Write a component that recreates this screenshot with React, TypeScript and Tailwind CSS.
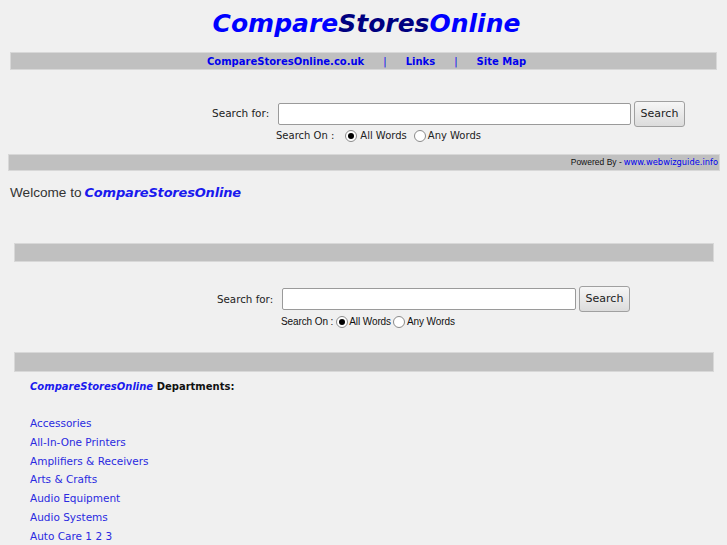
import React from 'react';

const departments = [
  'Accessories',
  'All-In-One Printers',
  'Amplifiers & Receivers',
  'Arts & Crafts',
  'Audio Equipment',
  'Audio Systems',
  'Auto Care 1 2 3',
];

function Radio({ checked }: { checked?: boolean }) {
  return (
    <span className="inline-flex h-[12px] w-[12px] items-center justify-center rounded-full border border-[#8a8a8a] bg-white">
      {checked && <span className="h-[6px] w-[6px] rounded-full bg-black" />}
    </span>
  );
}

function SearchBox({ variant }: { variant: 'top' | 'mid' }) {
  const top = variant === 'top';
  return (
    <div className={top ? 'flex flex-col pl-[212px] pt-[31px]' : 'flex flex-col pl-[217px] pt-[24px]'}>
      <div className="flex items-center">
        <span className={top ? 'w-[66px] text-[10.5px] text-[#222]' : 'w-[65px] text-[10.3px] text-[#222]'}>Search for:</span>
        <div className={top ? 'h-[22px] w-[353px] rounded-[2px] border border-[#9a9a9a] bg-white' : 'h-[22px] w-[294px] rounded-[2px] border border-[#9a9a9a] bg-white'} />
        <button className="ml-[3px] h-[26px] w-[51px] rounded-[3px] border border-[#a0a0a0] bg-gradient-to-b from-[#f6f6f6] to-[#dcdcdc] text-[11px] text-[#222]">
          Search
        </button>
      </div>
      {top ? (
        <div className="mt-[1px] flex items-center pl-[64px] text-[10px] text-[#222]">
          <span className="mr-[11px]">Search On :</span>
          <Radio checked />
          <span className="ml-[3px] mr-[7px]">All Words</span>
          <Radio />
          <span className="ml-[2px]">Any Words</span>
        </div>
      ) : (
        <div className="mt-[2px] flex items-center pl-[64px] text-[10px] tracking-[-0.1px] text-[#111]" style={{ fontFamily: '"Liberation Sans", Arial, sans-serif' }}>
          <span className="mr-[3px]">Search On :</span>
          <Radio checked />
          <span className="ml-[1px] mr-[2px]">All Words</span>
          <Radio />
          <span className="ml-[2px]">Any Words</span>
        </div>
      )}
    </div>
  );
}

export default function App() {
  return (
    <div className="min-h-[545px] w-[727px] overflow-hidden bg-[#f0f0f0]" style={{ fontFamily: '"DejaVu Sans", Verdana, sans-serif' }}>
      <h1 className="pt-[6px] pl-[6px] text-center text-[25px] leading-[36px] font-bold italic">
        <span className="text-[#0000ff]">Compare</span>
        <span className="text-[#000080]">Stores</span>
        <span className="text-[#0000ff]">Online</span>
      </h1>

      <div className="mx-[10px] mt-[10px] flex h-[18px] items-center justify-center border border-[#d8d8d8] bg-[#c0c0c0] pl-[6px] text-[10px] font-bold text-[#0000ee]">
        <span>CompareStoresOnline.co.uk</span>
        <span className="mx-[19px] font-normal">|</span>
        <span>Links</span>
        <span className="mx-[19px] font-normal">|</span>
        <span>Site Map</span>
      </div>

      <SearchBox variant="top" />

      <div className="ml-[8px] mr-[7px] mt-[11px] flex h-[17px] items-center justify-end border border-[#d8d8d8] bg-[#c0c0c0] pr-[1px] text-[8.3px]">
        <span className="text-[8.5px] text-[#111]" style={{ fontFamily: '"Liberation Sans", Arial, sans-serif' }}>Powered By - </span>
        <span className="ml-[2px] text-[#0000ee]">www.webwizguide.info</span>
      </div>

      <div className="ml-[10px] mt-[12px] flex items-baseline">
        <span className="mr-[3px] text-[13.6px] text-[#333]" style={{ fontFamily: '"Liberation Sans", Arial, sans-serif' }}>Welcome to</span>
        <span className="text-[13px] font-bold italic tracking-[-0.2px] text-[#1a1aee]">CompareStoresOnline</span>
      </div>

      <div className="ml-[14px] mr-[13px] mt-[40px] h-[19px] border border-[#d8d8d8] bg-[#c0c0c0]" />

      <SearchBox variant="mid" />

      <div className="ml-[14px] mr-[13px] mt-[23px] h-[20px] border border-[#d8d8d8] bg-[#c0c0c0]" />

      <div className="ml-[30px] mt-[7px] text-[10px] font-bold">
        <span className="italic text-[#1a1aee]">CompareStoresOnline</span>
        <span className="text-[#111]"> Departments:</span>
      </div>

      <ul className="ml-[30px] mt-[20px] flex flex-col">
        {departments.map((d) => (
          <li key={d} className="h-[18.7px] text-[10.5px] leading-[18.7px] text-[#2a2ae0]">
            {d}
          </li>
        ))}
      </ul>
    </div>
  );
}
